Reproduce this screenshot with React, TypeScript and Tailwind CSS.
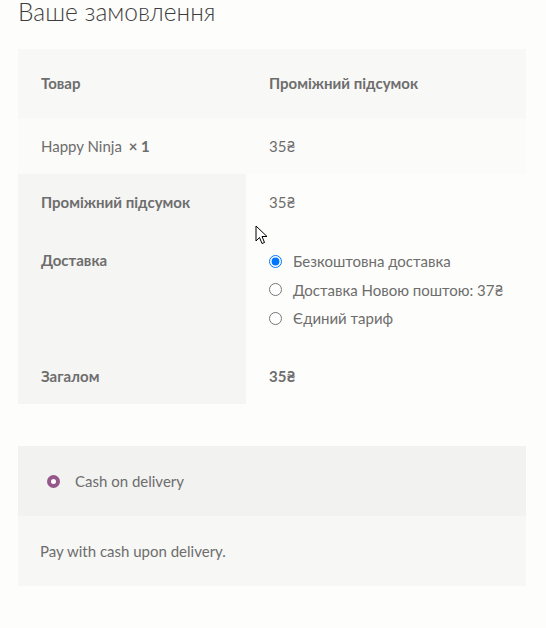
import React from "react";

const font = { fontFamily: '"Lato", "Open Sans", sans-serif' };

export default function App() {
  return (
    <div className="relative min-h-[628px] w-[546px] bg-[#fdfdfb] text-[#6d6d6d]" style={font}>
      <h3 className="px-[18px] text-[24.5px] font-light leading-[24px] text-[#3d3d3d]">
        Ваше замовлення
      </h3>
      <div className="mx-[18px] mt-[25px] w-[508px] text-[15px]">
        <div className="flex h-[69px] items-center bg-[#f8f8f6] font-bold">
          <div className="w-[228px] pl-[23px]">Товар</div>
          <div className="pl-[23px]">Проміжний підсумок</div>
        </div>
        <div className="flex h-[56px] items-center bg-[#fbfbf9]">
          <div className="w-[228px] pl-[23px]">
            Happy Ninja <strong className="ml-[3px] font-bold">× 1</strong>
          </div>
          <div className="pl-[23px]">35₴</div>
        </div>
        <div className="flex">
          <div className="w-[228px] bg-[#f5f5f4] font-bold">
            <div className="flex h-[57px] items-center pl-[23px]">Проміжний підсумок</div>
            <div className="h-[117px] pl-[23px] pt-[16px] leading-[26px]">Доставка</div>
            <div className="flex h-[56px] items-center pl-[23px]">Загалом</div>
          </div>
          <div className="flex-1">
            <div className="flex h-[57px] items-center pl-[23px]">35₴</div>
            <div className="h-[117px] pl-[23px] pt-[16px]">
              {["Безкоштовна доставка", "Доставка Новою поштою: 37₴", "Єдиний тариф"].map((t, i) => (
                <label key={t} className="flex h-[28.5px] items-center">
                  <input
                    type="radio"
                    name="ship"
                    defaultChecked={i === 0}
                    className="m-0 h-[13px] w-[13px]"
                  />
                  <span className="ml-[11px]">{t}</span>
                </label>
              ))}
            </div>
            <div className="flex h-[56px] items-center pl-[23px] font-bold">35₴</div>
          </div>
        </div>
      </div>
      <div className="mx-[18px] mt-[42px] w-[508px] text-[15px]">
        <div className="flex h-[70px] items-center bg-[#f2f2f1] pl-[29px]">
          <span className="box-border h-[13px] w-[13px] rounded-full border-[4px] border-[#96588a] bg-white" />
          <span className="ml-[15px]">Cash on delivery</span>
        </div>
        <div className="flex h-[70px] items-center bg-[#f7f7f6] pl-[22px]">
          Pay with cash upon delivery.
        </div>
      </div>
      <svg
        className="absolute left-[255px] top-[225px]"
        width="14"
        height="21"
        viewBox="0 0 14 21"
      >
        <path
          d="M1 1 L1 16 L4.5 12.5 L7 18.5 L9.5 17.5 L7 11.5 L12 11.5 Z"
          fill="white"
          stroke="black"
          strokeWidth="1"
          strokeLinejoin="round"
        />
      </svg>
    </div>
  );
}
